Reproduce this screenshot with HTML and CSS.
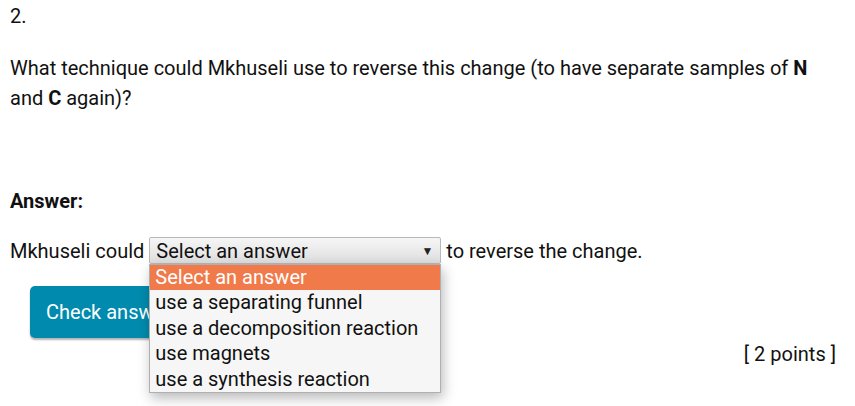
FILE: index.html
```html
<!DOCTYPE html>
<html>
<head>
<meta charset="utf-8">
<link rel="stylesheet" href="styles.css">
</head>
<body>
<div class="page">
  <div class="q-num">2.</div>
  <p class="question">What technique could Mkhuseli use to reverse this change (to have separate samples of <b>N</b> and <b>C</b> again)?</p>
  <div class="answer-label">Answer:</div>
  <div class="answer-line">
    <span>Mkhuseli could</span>
    <span class="select">
      <span class="select-value">Select an answer</span>
      <span class="select-arrow">▼</span>
      <span class="dropdown">
        <span class="option selected">Select an answer</span>
        <span class="option">use a separating funnel</span>
        <span class="option">use a decomposition reaction</span>
        <span class="option">use magnets</span>
        <span class="option">use a synthesis reaction</span>
      </span>
    </span>
    <span>to reverse the change.</span>
  </div>
  <div class="actions">
    <button class="check-btn">Check answer</button>
  </div>
  <div class="points">[ 2 points ]</div>
</div>
</body>
</html>
```
FILE: styles.css
```css
html, body {
  margin: 0;
  padding: 0;
  background: #fff;
}
body {
  font-family: Roboto, "Liberation Sans", sans-serif;
  font-size: 20px;
  color: #111;
  min-height: 406px;
}
.page {
  padding: 4px 19px 0 10px;
}
.q-num {
  line-height: 24px;
}
.question {
  margin: 25px 0 0;
  line-height: 30px;
}
.answer-label {
  font-weight: bold;
  margin-top: 76px;
  line-height: 24px;
}
.answer-line {
  display: flex;
  align-items: center;
  gap: 5px;
  margin-top: 24px;
  line-height: 24px;
}
.select {
  position: relative;
  display: flex;
  align-items: center;
  justify-content: space-between;
  width: 292px;
  height: 27px;
  box-sizing: border-box;
  padding: 0 7px 0 6px;
  border: 1px solid #b9b9b9;
  border-radius: 2px;
  background: linear-gradient(#f6f6f6, #dedede);
}
.select-arrow {
  font-size: 12px;
  color: #222;
}
.dropdown {
  position: absolute;
  left: -1px;
  top: 26px;
  width: 292px;
  box-sizing: border-box;
  border: 1px solid #b0b0b0;
  background: #f6f6f6;
  box-shadow: 2px 5px 12px rgba(0,0,0,0.28);
  display: flex;
  flex-direction: column;
  z-index: 10;
}
.option {
  height: 25.4px;
  line-height: 25px;
  padding-left: 5px;
  white-space: nowrap;
}
.option.selected {
  background: #f07a4a;
  color: #fff;
}
.actions {
  margin-top: 22px;
  padding-left: 20px;
}
.check-btn {
  font-family: inherit;
  font-size: 20px;
  color: #fff;
  background: #008bae;
  border: none;
  border-radius: 5px;
  height: 52px;
  padding: 0 16px;
  box-shadow: 0 2px 2px rgba(0,0,0,0.3);
}
.points {
  text-align: right;
  margin-top: 4px;
  line-height: 24px;
}
```
